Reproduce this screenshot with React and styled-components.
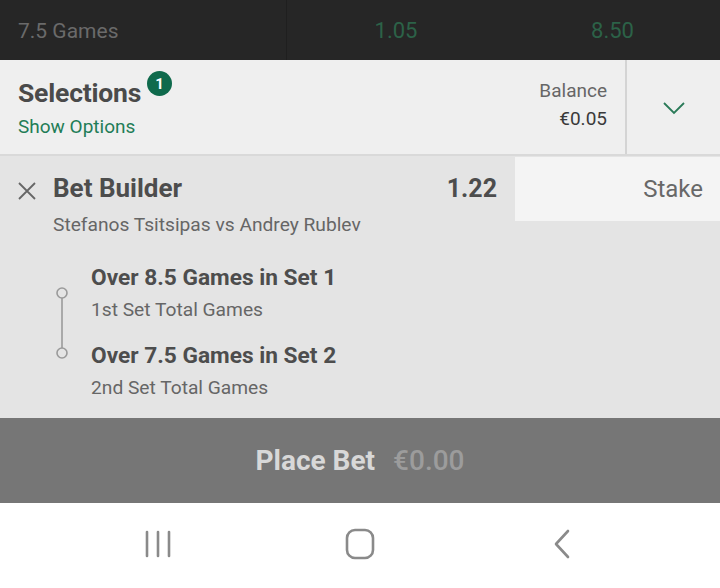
import React from "react";
import styled, { createGlobalStyle } from "styled-components";

const GlobalStyle = createGlobalStyle`
  html, body {
    margin: 0;
    padding: 0;
    background: #ffffff;
    font-family: Roboto, "Liberation Sans", Arial, sans-serif;
  }
  * { box-sizing: border-box; }
`;

const Screen = styled.div`
  width: 720px;
  height: 588px;
  display: flex;
  flex-direction: column;
  overflow: hidden;
`;

// Market row at top (dark)
const MarketRow = styled.div`
  height: 60px;
  background: #262626;
  display: grid;
  grid-template-columns: 287px 218px 1fr;
`;

const MarketCell = styled.div`
  display: flex;
  align-items: center;
  justify-content: ${(p) => (p.$center ? "center" : "flex-start")};
  padding-left: ${(p) => (p.$center ? "0" : "18px")};
  padding-top: 1px;
  font-size: ${(p) => (p.$odds ? "22px" : "21px")};
  color: ${(p) => (p.$odds ? "#2c6248" : "#6a6a6a")};
  border-right: ${(p) => (p.$divider ? "1px solid #1f1f1f" : "none")};
`;

// Selections header
const Header = styled.div`
  height: 96px;
  background: #efefef;
  border-bottom: 2px solid #d9d9d9;
  display: flex;
`;

const HeaderMain = styled.div`
  flex: 1;
  padding: 13px 18px 0;
  display: flex;
  flex-direction: column;
`;

const TitleRow = styled.div`
  display: flex;
  align-items: flex-start;
`;

const Title = styled.div`
  font-size: 26.5px;
  font-weight: 700;
  color: #4a4a4a;
  margin-top: 4px;
  letter-spacing: -0.2px;
`;

const Badge = styled.span`
  width: 25px;
  height: 25px;
  border-radius: 50%;
  background: #0f6a4c;
  color: #fff;
  font-size: 15px;
  font-weight: 700;
  display: flex;
  align-items: center;
  justify-content: center;
  margin-left: 6px;
  margin-top: -2px;
`;

const ShowOptions = styled.div`
  font-size: 19px;
  color: #1f7d57;
  margin-top: 7px;
`;

const Balance = styled.div`
  padding: 17px 18px 0 0;
  text-align: right;
  font-size: 19px;
  line-height: 28px;
  color: #666;
`;

const BalanceValue = styled.div`
  color: #3a3a3a;
`;

const ToggleCell = styled.div`
  width: 95px;
  border-left: 2px solid #d4d4d4;
  display: flex;
  align-items: center;
  justify-content: center;
  padding-top: 1px;
`;

// Bet section
const BetSection = styled.div`
  height: 262px;
  background: #e4e4e4;
  display: flex;
  align-items: flex-start;
`;

const BetMain = styled.div`
  flex: 1;
  padding: 17px 18px 0 18px;
`;

const BetHeadRow = styled.div`
  display: flex;
  align-items: center;
`;

const CloseBtn = styled.div`
  width: 35px;
  display: flex;
  align-items: center;
  padding-top: 6px;
`;

const BetTitle = styled.div`
  flex: 1;
  font-size: 26px;
  font-weight: 700;
  color: #4d4d4d;
`;

const Odds = styled.div`
  font-size: 25px;
  font-weight: 700;
  color: #4d4d4d;
`;

const Match = styled.div`
  font-size: 19.2px;
  color: #666;
  margin: 10px 0 0 35px;
`;

const Legs = styled.div`
  display: flex;
  margin-top: 28px;
`;

const Connector = styled.div`
  width: 73px;
  display: flex;
  justify-content: flex-start;
  padding-top: 23px;
  padding-left: 37px;
`;

const LegList = styled.div`
  display: flex;
  flex-direction: column;
  gap: 21px;
`;

const Leg = styled.div`
  display: flex;
  flex-direction: column;
`;

const LegTitle = styled.div`
  font-size: 22.7px;
  font-weight: 700;
  color: #4d4d4d;
`;

const LegSub = styled.div`
  font-size: 19.2px;
  color: #666;
  margin-top: 7px;
`;

const StakeBox = styled.div`
  width: 205px;
  height: 64px;
  margin-top: 1px;
  background: #f4f4f4;
  display: flex;
  align-items: center;
  justify-content: flex-end;
  padding-right: 17px;
  font-size: 24px;
  color: #686868;
`;

// Place bet
const PlaceBar = styled.div`
  height: 85px;
  background: #767676;
  display: flex;
  align-items: center;
  justify-content: center;
  gap: 18px;
`;

const PlaceLabel = styled.span`
  font-size: 28px;
  font-weight: 700;
  color: #d8d8d8;
`;

const PlaceAmount = styled.span`
  font-size: 28px;
  font-weight: 500;
  color: #9c9c9c;
`;

// Android navigation
const NavBar = styled.div`
  flex: 1;
  background: #ffffff;
  display: grid;
  grid-template-columns: repeat(3, 202px);
  align-items: center;
  padding: 0 0 4px 57px;
`;

const NavItem = styled.div`
  display: flex;
  justify-content: center;
`;

const Chevron = () => (
  <svg width="24" height="14" viewBox="0 0 24 14">
    <path d="M2 2 L12 12 L22 2" fill="none" stroke="#2a7a58" strokeWidth="1.8" />
  </svg>
);

const CloseIcon = () => (
  <svg width="18" height="18" viewBox="0 0 18 18">
    <path d="M1 1 L17 17 M17 1 L1 17" stroke="#666" strokeWidth="1.8" fill="none" />
  </svg>
);

const LegLine = () => (
  <svg width="14" height="72" viewBox="0 0 14 72">
    <circle cx="7" cy="6" r="5" fill="none" stroke="#9a9a9a" strokeWidth="1.6" />
    <line x1="7" y1="11" x2="7" y2="61" stroke="#9a9a9a" strokeWidth="1.6" />
    <circle cx="7" cy="66" r="5" fill="none" stroke="#9a9a9a" strokeWidth="1.6" />
  </svg>
);

const RecentsIcon = () => (
  <svg width="28" height="30" viewBox="0 0 28 30">
    <g stroke="#8a8a8a" strokeWidth="2.6" strokeLinecap="round">
      <line x1="3" y1="3" x2="3" y2="27" />
      <line x1="14" y1="3" x2="14" y2="27" />
      <line x1="25" y1="3" x2="25" y2="27" />
    </g>
  </svg>
);

const HomeIcon = () => (
  <svg width="30" height="32" viewBox="0 0 30 32">
    <rect x="2" y="2" width="26" height="28" rx="8" fill="none" stroke="#8a8a8a" strokeWidth="2.6" />
  </svg>
);

const BackIcon = () => (
  <svg width="18" height="32" viewBox="0 0 18 32">
    <path d="M15 3 L3 16 L15 29" fill="none" stroke="#8a8a8a" strokeWidth="2.6" strokeLinecap="round" strokeLinejoin="round" />
  </svg>
);

const legs = [
  { title: "Over 8.5 Games in Set 1", sub: "1st Set Total Games" },
  { title: "Over 7.5 Games in Set 2", sub: "2nd Set Total Games" },
];

const App = () => {
  return (
    <>
      <GlobalStyle />
      <Screen>
        <MarketRow>
          <MarketCell $divider>7.5 Games</MarketCell>
          <MarketCell $center $odds>1.05</MarketCell>
          <MarketCell $center $odds>8.50</MarketCell>
        </MarketRow>

        <Header>
          <HeaderMain>
            <TitleRow>
              <Title>Selections</Title>
              <Badge>1</Badge>
            </TitleRow>
            <ShowOptions>Show Options</ShowOptions>
          </HeaderMain>
          <Balance>
            <div>Balance</div>
            <BalanceValue>€0.05</BalanceValue>
          </Balance>
          <ToggleCell>
            <Chevron />
          </ToggleCell>
        </Header>

        <BetSection>
          <BetMain>
            <BetHeadRow>
              <CloseBtn>
                <CloseIcon />
              </CloseBtn>
              <BetTitle>Bet Builder</BetTitle>
              <Odds>1.22</Odds>
            </BetHeadRow>
            <Match>Stefanos Tsitsipas vs Andrey Rublev</Match>
            <Legs>
              <Connector>
                <LegLine />
              </Connector>
              <LegList>
                {legs.map((leg) => (
                  <Leg key={leg.title}>
                    <LegTitle>{leg.title}</LegTitle>
                    <LegSub>{leg.sub}</LegSub>
                  </Leg>
                ))}
              </LegList>
            </Legs>
          </BetMain>
          <StakeBox>Stake</StakeBox>
        </BetSection>

        <PlaceBar>
          <PlaceLabel>Place Bet</PlaceLabel>
          <PlaceAmount>€0.00</PlaceAmount>
        </PlaceBar>

        <NavBar>
          <NavItem>
            <RecentsIcon />
          </NavItem>
          <NavItem>
            <HomeIcon />
          </NavItem>
          <NavItem>
            <BackIcon />
          </NavItem>
        </NavBar>
      </Screen>
    </>
  );
};

export default App;
